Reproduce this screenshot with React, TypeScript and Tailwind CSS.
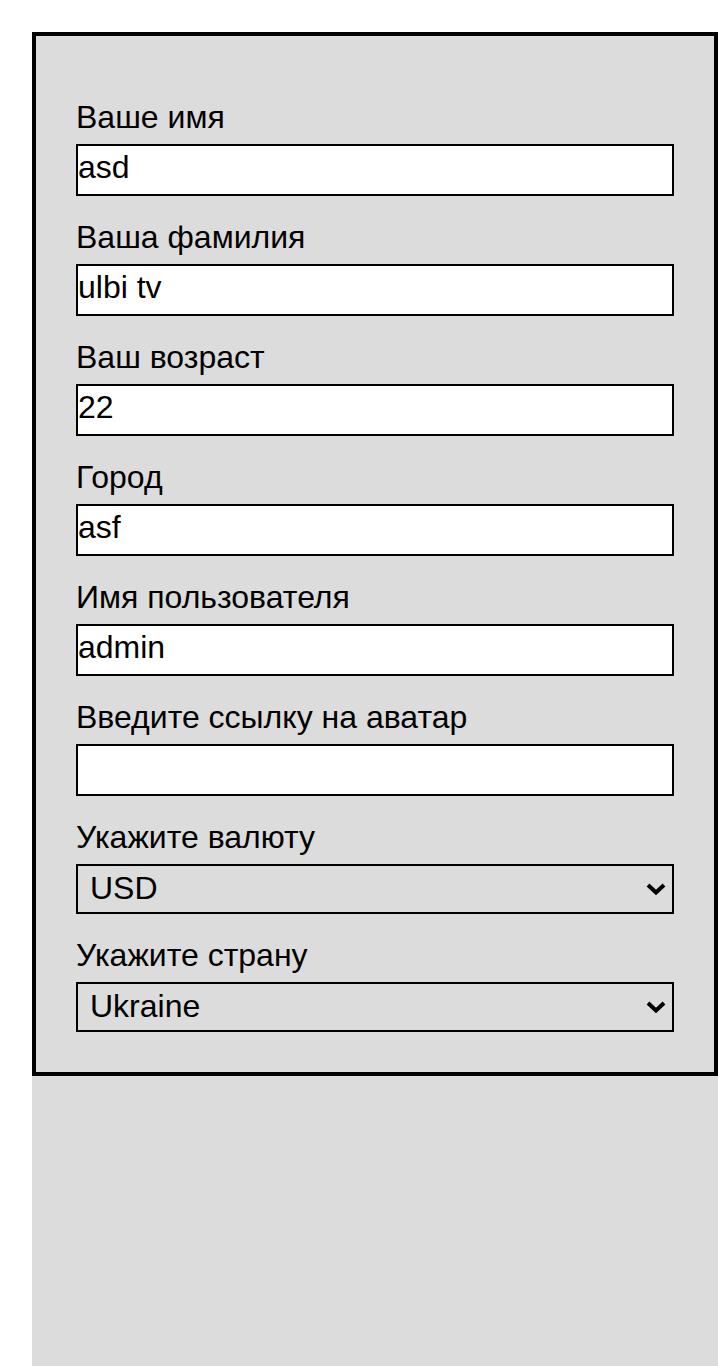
import React, { useState } from "react";

const fields = [
  { label: "Ваше имя", value: "asd" },
  { label: "Ваша фамилия", value: "ulbi tv" },
  { label: "Ваш возраст", value: "22" },
  { label: "Город", value: "asf" },
  { label: "Имя пользователя", value: "admin" },
  { label: "Введите ссылку на аватар", value: "" },
];

function Chevron() {
  return (
    <svg
      className="pointer-events-none absolute right-[8px] top-1/2 -translate-y-1/2"
      width="20"
      height="13"
      viewBox="0 0 20 13"
      fill="none"
    >
      <path d="M2 2.5 L10 10 L18 2.5" stroke="#000" strokeWidth="4" />
    </svg>
  );
}

function SelectRow(props: { label: string; options: string[]; value: string }) {
  const [v, setV] = useState(props.value);
  return (
    <div className="flex flex-col pt-[24px]">
      <label className="text-[32px] leading-[34px] mb-[10px]">{props.label}</label>
      <div className="relative">
        <select
          value={v}
          onChange={(e) => setV(e.target.value)}
          className="block w-full h-[50px] appearance-none border-2 border-black bg-transparent pl-[12px] pb-[3px] text-[32px] leading-[36px] outline-none"
        >
          {props.options.map((o) => (
            <option key={o} value={o}>
              {o}
            </option>
          ))}
        </select>
        <Chevron />
      </div>
    </div>
  );
}

export default function App() {
  const [values, setValues] = useState(fields.map((f) => f.value));
  return (
    <div className="bg-white pl-[32px] pt-[32px] font-['Liberation_Sans',Arial,sans-serif] text-black">
      <div className="bg-[#dcdcdc] min-h-[1334px]">
        <div className="border-4 border-black px-[40px] pt-[40px] pb-[40px] flex flex-col">
          {fields.map((f, i) => (
            <div key={f.label} className="flex flex-col pt-[24px]">
              <label className="text-[32px] leading-[34px] mb-[10px]">{f.label}</label>
              <input
                value={values[i]}
                onChange={(e) => {
                  const next = [...values];
                  next[i] = e.target.value;
                  setValues(next);
                }}
                className="block w-full h-[52px] border-2 border-black bg-white px-0 pb-[6px] text-[32px] outline-none"
              />
            </div>
          ))}
          <SelectRow label="Укажите валюту" options={["RUB", "EUR", "USD"]} value="USD" />
          <SelectRow label="Укажите страну" options={["Russia", "Belarus", "Ukraine", "Kazakhstan", "Armenia"]} value="Ukraine" />
        </div>
      </div>
    </div>
  );
}
